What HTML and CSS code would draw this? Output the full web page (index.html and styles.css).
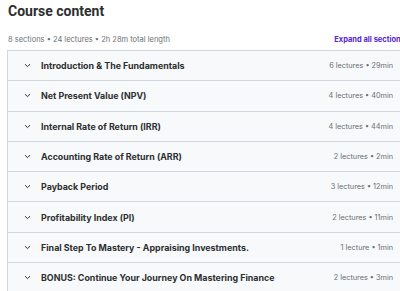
FILE: index.html
```html
<!DOCTYPE html>
<html lang="en">

<head>
  <meta charset="UTF-8">
  <meta name="viewport" content="width=device-width, initial-scale=1.0">
  <title>Course content</title>
  <link rel="stylesheet" href="styles.css">
</head>

<body>
  <div class="curriculum">
    <h2>Course content</h2>

    <div class="summary">
      <span>8 sections • 24 lectures • 2h 28m total length</span>
      <button class="expand">Expand all sections</button>
    </div>

    <div class="sections">
      <div class="section">
        <span class="chevron"><svg width="7" height="5" viewBox="0 0 7 5"><path d="M1 1.2 3.5 3.6 6 1.2" fill="none" stroke="#2d2f31" stroke-width="1"/></svg></span>
        <span class="title">Introduction &amp; The Fundamentals</span>
        <span class="meta">6 lectures • 29min</span>
      </div>
      <div class="section">
        <span class="chevron"><svg width="7" height="5" viewBox="0 0 7 5"><path d="M1 1.2 3.5 3.6 6 1.2" fill="none" stroke="#2d2f31" stroke-width="1"/></svg></span>
        <span class="title">Net Present Value (NPV)</span>
        <span class="meta">4 lectures • 40min</span>
      </div>
      <div class="section">
        <span class="chevron"><svg width="7" height="5" viewBox="0 0 7 5"><path d="M1 1.2 3.5 3.6 6 1.2" fill="none" stroke="#2d2f31" stroke-width="1"/></svg></span>
        <span class="title">Internal Rate of Return (IRR)</span>
        <span class="meta">4 lectures • 44min</span>
      </div>
      <div class="section">
        <span class="chevron"><svg width="7" height="5" viewBox="0 0 7 5"><path d="M1 1.2 3.5 3.6 6 1.2" fill="none" stroke="#2d2f31" stroke-width="1"/></svg></span>
        <span class="title">Accounting Rate of Return (ARR)</span>
        <span class="meta">2 lectures • 2min</span>
      </div>
      <div class="section">
        <span class="chevron"><svg width="7" height="5" viewBox="0 0 7 5"><path d="M1 1.2 3.5 3.6 6 1.2" fill="none" stroke="#2d2f31" stroke-width="1"/></svg></span>
        <span class="title">Payback Period</span>
        <span class="meta">3 lectures • 12min</span>
      </div>
      <div class="section">
        <span class="chevron"><svg width="7" height="5" viewBox="0 0 7 5"><path d="M1 1.2 3.5 3.6 6 1.2" fill="none" stroke="#2d2f31" stroke-width="1"/></svg></span>
        <span class="title">Profitability Index (PI)</span>
        <span class="meta">2 lectures • 11min</span>
      </div>
      <div class="section">
        <span class="chevron"><svg width="7" height="5" viewBox="0 0 7 5"><path d="M1 1.2 3.5 3.6 6 1.2" fill="none" stroke="#2d2f31" stroke-width="1"/></svg></span>
        <span class="title">Final Step To Mastery - Appraising Investments.</span>
        <span class="meta">1 lecture • 1min</span>
      </div>
      <div class="section">
        <span class="chevron"><svg width="7" height="5" viewBox="0 0 7 5"><path d="M1 1.2 3.5 3.6 6 1.2" fill="none" stroke="#2d2f31" stroke-width="1"/></svg></span>
        <span class="title">BONUS: Continue Your Journey On Mastering Finance</span>
        <span class="meta">2 lectures • 3min</span>
      </div>
    </div>
  </div>
</body>

</html>
```
FILE: styles.css
```css
body {
  margin: 0;
  font-family: Inter, "Noto Sans", sans-serif;
  color: #2d2f31;
  background: #fff;
  overflow: hidden;
}

.curriculum {
  width: 420px;
  padding-left: 7px;
}

h2 {
  margin: 0;
  padding: 2px 0 0 1px;
  font-family: Roboto, sans-serif;
  font-size: 14px;
  font-weight: 700;
  line-height: 18px;
}

.summary {
  display: flex;
  justify-content: space-between;
  align-items: center;
  margin-top: 11px;
  padding: 0 0 0 1px;
  height: 16px;
  font-size: 7.5px;
  color: #6a6f73;
}

.expand {
  background: none;
  border: none;
  padding: 0;
  font-family: inherit;
  font-size: 7.5px;
  font-weight: 700;
  color: #5624d0;
  margin-right: 22px;
}

.sections {
  margin-top: 3px;
  border: 1px solid #d1d7dc;
  border-right: none;
}

.section {
  display: flex;
  align-items: center;
  height: 29.3px;
  background: #f7f9fa;
  border-bottom: 1px solid #d1d7dc;
  padding-left: 16px;
  padding-right: 34px;
}

.chevron {
  display: flex;
  width: 17px;
}

.title {
  flex: 1;
  font-size: 8.9px;
  font-weight: 700;
}

.meta {
  font-size: 7.3px;
  color: #6a6f73;
}
```
